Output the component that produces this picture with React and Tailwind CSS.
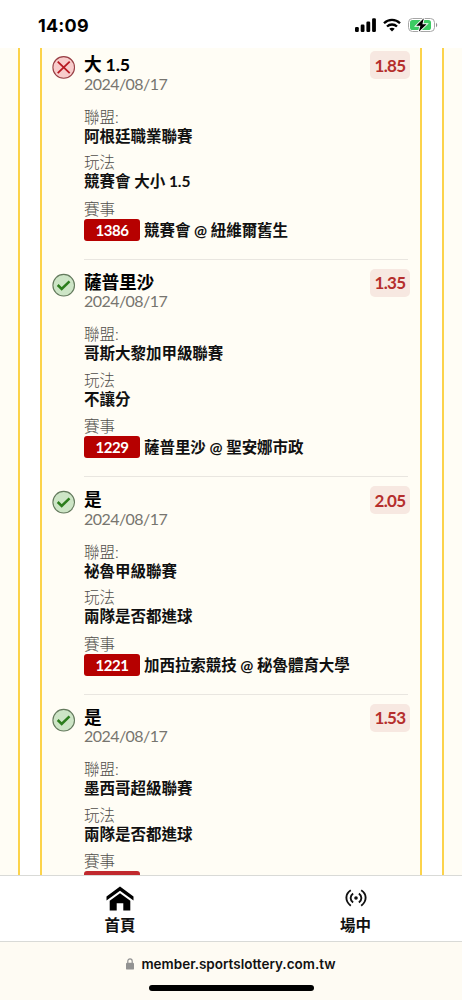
const bets = [
  {
    pick: "大 1.5",
    date: "2024/08/17",
    odds: "1.85",
    won: false,
    league: "阿根廷職業聯賽",
    market: "競賽會 大小 1.5",
    code: "1386",
    match: "競賽會 @ 紐維爾舊生",
  },
  {
    pick: "薩普里沙",
    date: "2024/08/17",
    odds: "1.35",
    won: true,
    league: "哥斯大黎加甲級聯賽",
    market: "不讓分",
    code: "1229",
    match: "薩普里沙 @ 聖安娜市政",
  },
  {
    pick: "是",
    date: "2024/08/17",
    odds: "2.05",
    won: true,
    league: "祕魯甲級聯賽",
    market: "兩隊是否都進球",
    code: "1221",
    match: "加西拉索競技 @ 秘魯體育大學",
  },
  {
    pick: "是",
    date: "2024/08/17",
    odds: "1.53",
    won: true,
    league: "墨西哥超級聯賽",
    market: "兩隊是否都進球",
    code: "",
    match: "",
  },
];

const StatusBar = () => (
  <header className="relative z-10 flex h-12 shrink-0 items-start justify-between bg-white pl-[38px] pr-[24px] pt-[15px]">
    <span className="font-['Inter','Liberation_Sans',sans-serif] text-[18px] font-bold leading-[21px] tracking-[0.2px] text-black">
      14:09
    </span>

    <div className="flex items-center gap-[7px] pt-[3px]">
      <svg width="21" height="14" viewBox="0 0 21 14">
        <rect x="0" y="9" width="3.8" height="5" rx="1.2" />
        <rect x="5.7" y="6.5" width="3.8" height="7.5" rx="1.2" />
        <rect x="11.4" y="3.5" width="3.8" height="10.5" rx="1.2" />
        <rect x="17.1" y="0.3" width="3.8" height="13.7" rx="1.2" />
      </svg>

      <svg width="18" height="14" viewBox="0 0 18 14" fill="none" stroke="#000" strokeWidth="2.3">
        <path d="M1 5.2C5.5.7 12.5.7 17 5.2" />
        <path d="M4 8.5c2.8-2.7 7.2-2.7 10 0" />
        <path d="M9 13.4 6.3 10.7c1.5-1.4 3.9-1.4 5.4 0z" fill="#000" stroke="none" />
      </svg>

      <svg width="30" height="14" viewBox="0 0 30 14">
        <rect x="0.5" y="0.5" width="26" height="13" rx="4" fill="#fff" stroke="#a6a6a6" />
        <rect x="2" y="2" width="21" height="10" rx="2.6" fill="#3ccb63" />
        <path d="M28 4.8v4.5c1.7-.7 1.7-3.8 0-4.5z" fill="#8e8e8e" />
        <path d="M15.8.2 8.2 7.8h4.2l-1.6 6L18.6 6.2h-4.2z" stroke="#fff" strokeWidth="1.8" paintOrder="stroke" />
      </svg>
    </div>
  </header>
);

const ResultIcon = ({ won }) => (
  <svg className="mt-[2px] shrink-0" width="24" height="24" viewBox="0 0 24 24" fill="none">
    {won ? (
      <>
        <circle cx="11.7" cy="12.2" r="10.8" fill="#cde5c6" stroke="#647a5d" strokeWidth="1.1" />
        <path d="m5.7 12 4 4 7.8-7.7" stroke="#2c7d1d" strokeWidth="2.5" />
      </>
    ) : (
      <>
        <circle cx="11.7" cy="12.4" r="10.8" fill="#f8cccb" stroke="#983f45" strokeWidth="1.1" />
        <path d="m5.7 6.6 12 11.6M17.7 6.6l-12 11.6" stroke="#b81922" strokeWidth="1.8" />
      </>
    )}
  </svg>
);

const Field = ({ label, children }) => (
  <div className="h-[45.7px]">
    <div className="text-[15.5px] font-light leading-[19px] text-[#504e4a]">{label}</div>
    <div className="whitespace-nowrap text-[15.5px] font-bold leading-[19.5px] tracking-[-0.02px] text-[#111]">
      {children}
    </div>
  </div>
);

const BetItem = ({ bet, last }) => (
  <article className="flex h-[217.5px] pl-[10px] pt-[11px]">
    <ResultIcon won={bet.won} />

    <div className={`ml-2 w-[324px] shrink-0 ${last ? "" : "border-b border-[#e9e6e0]"}`}>
      <div className="flex justify-between">
        <div>
          <h2 className="whitespace-nowrap pt-[2px] text-[17.7px] font-bold leading-[20.5px] tracking-[-0.2px] text-black">
            {bet.pick}
          </h2>
          <div className="text-[16px] leading-[16px] tracking-[-0.56px] text-[#77756f]">{bet.date}</div>
        </div>
        <div className="-mr-[2px] -mt-[2px] flex h-7 w-10 items-center justify-center rounded-[5px] bg-[#f7e8e1] pt-px text-[17px] font-bold tracking-[-0.6px] text-[#b52e2c]">
          {bet.odds}
        </div>
      </div>

      <div className="mt-[16px]">
        <Field label="聯盟:">{bet.league}</Field>
        <Field label="玩法">{bet.market}</Field>
        <div className="text-[15.5px] font-light leading-[20px] text-[#504e4a]">賽事</div>
        <div className="flex items-center gap-[4px]">
          <span
            className={`flex h-[22px] w-14 shrink-0 items-center justify-center rounded-[3px] text-[15px] font-bold tracking-[-0.5px] text-white ${
              last ? "bg-[#c1292e]" : "bg-[#b60000]"
            }`}
          >
            {bet.code}
          </span>
          <span className="whitespace-nowrap text-[15.5px] font-bold leading-[22px] tracking-[-0.06px] text-[#111]">
            {bet.match}
          </span>
        </div>
      </div>
    </div>
  </article>
);

const HomeIcon = () => (
  <svg width="28" height="26" viewBox="0 0 28 26">
    <path d="M14 .4 27.5 10.6v4L14 4.8.5 14.6v-4z" />
    <path d="m14 7.2 10.3 7.5v9.8h-7v-7.3h-6.6v7.3h-7v-9.8z" />
  </svg>
);

const LiveIcon = () => (
  <svg width="22" height="18" viewBox="0 0 22 18" fill="none" stroke="#111" strokeWidth="1.9">
    <path d="M5.8 1.3C0 5-.2 12 5.8 16.7M16.2 1.3c5.8 3.7 6 10.7 0 15.4" />
    <path d="M8.1 4.6c-3.3 2.5-3.3 6.3 0 8.8M13.9 4.6c3.3 2.5 3.3 6.3 0 8.8" />
    <circle cx="11" cy="9" r="1.8" fill="#111" stroke="none" />
  </svg>
);

const BottomNav = () => (
  <nav className="grid h-[67px] shrink-0 grid-cols-2 border-y border-[#d9dad7] bg-white text-[15.5px] font-semibold leading-[20px] text-[#111]">
    <div className="flex flex-col items-center pl-[9px] pt-[9.5px]">
      <HomeIcon />
      <span className="mt-[3.5px]">首頁</span>
    </div>
    <div className="flex flex-col items-center pl-[18px] pt-[13px]">
      <LiveIcon />
      <span className="mt-[8px]">場中</span>
    </div>
  </nav>
);

const AddressBar = () => (
  <footer className="flex h-[58px] shrink-0 flex-col items-center bg-[#fefbf3]">
    <div className="mt-[12px] flex items-center gap-[7px]">
      <svg width="8" height="12" viewBox="0 0 8 12">
        <path d="M1.8 5V3.2c0-3 4.4-3 4.4 0V5" fill="none" stroke="#929292" strokeWidth="1.2" />
        <rect y="4.8" width="8" height="6.8" rx="1.2" fill="#929292" />
      </svg>
      <span className="font-['Inter','Liberation_Sans',sans-serif] text-[13.5px] font-semibold leading-[20px] text-[#111]">
        member.sportslottery.com.tw
      </span>
    </div>
    <div className="mt-[11px] h-[6px] w-[165px] rounded-full bg-black" />
  </footer>
);

export default function App() {
  return (
    <div className="flex h-[1000px] w-[462px] flex-col overflow-hidden bg-white font-['Lato','Noto_Sans_CJK_TC',sans-serif]">
      <StatusBar />

      <main className="flex min-h-0 flex-1 overflow-hidden bg-white">
        <div className="w-5 shrink-0 border-r-2 border-[#fcd34b] bg-[#fffdf5]" />

        <div className="mx-5 h-full w-[382px] shrink-0 overflow-hidden border-x-2 border-[#fcd34b] bg-[#fffdf5]">
          <div className="-mt-[6px]">
            {bets.map((bet, i) => (
              <BetItem key={i} bet={bet} last={i === bets.length - 1} />
            ))}
          </div>
        </div>

        <div className="flex-1 border-l-2 border-[#fcd34b] bg-[#fffdf5]" />
      </main>

      <BottomNav />
      <AddressBar />
    </div>
  );
}
